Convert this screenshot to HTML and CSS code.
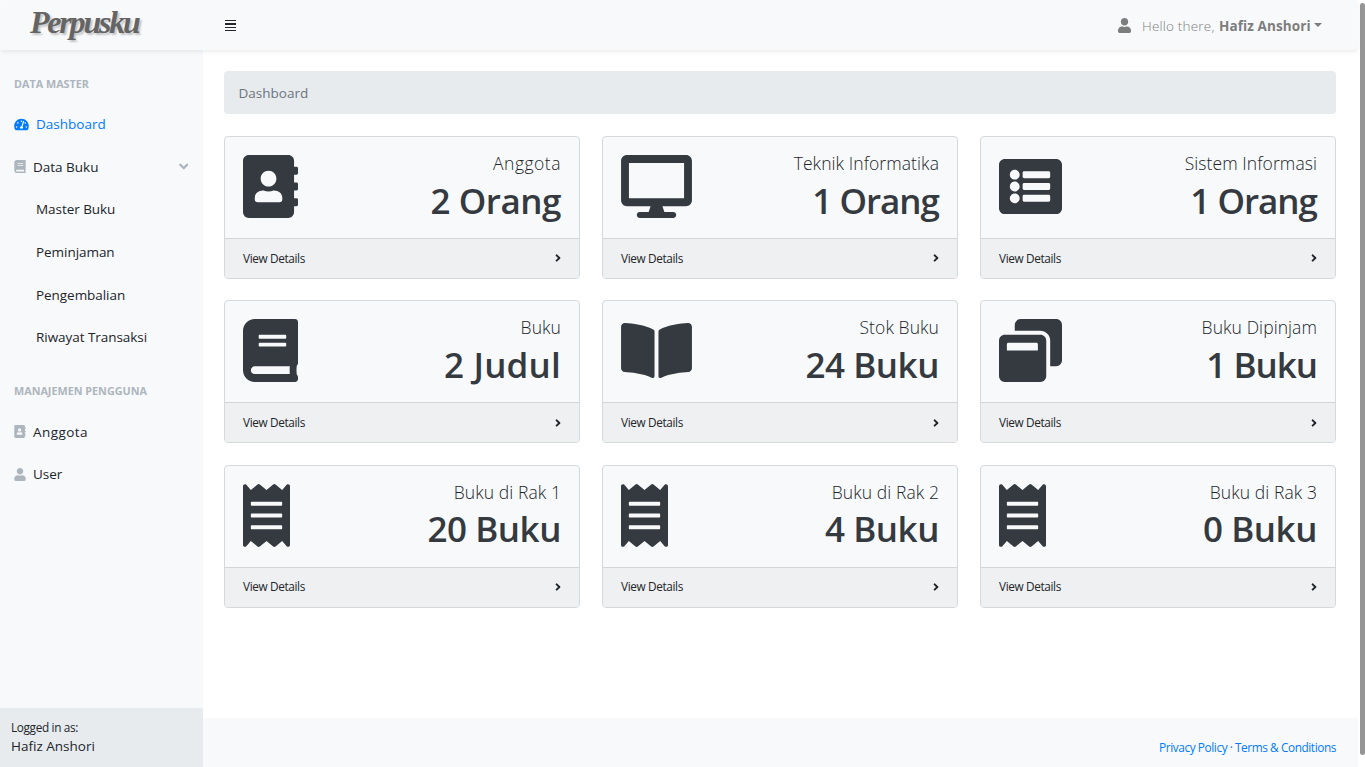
FILE: index.html
```html
<!DOCTYPE html>
<html lang="id">
<head>
<meta charset="utf-8">
<title>Perpusku</title>
<link rel="stylesheet" href="styles.css">
</head>
<body>
<svg class="sprite" aria-hidden="true">
  <symbol id="address-book" viewBox="0 0 448 512"><path d="M436 160c6.600 0 12-5.400 12-12v-40c0-6.600-5.400-12-12-12h-20V48c0-26.500-21.500-48-48-48H48C21.500 0 0 21.500 0 48v416c0 26.500 21.500 48 48 48h320c26.500 0 48-21.500 48-48v-48h20c6.600 0 12-5.400 12-12v-40c0-6.600-5.400-12-12-12h-20v-64h20c6.600 0 12-5.400 12-12v-40c0-6.600-5.400-12-12-12h-20v-64h20zm-228-32c35.300 0 64 28.700 64 64s-28.700 64-64 64-64-28.700-64-64 28.700-64 64-64zm112 236.800c0 10.600-10 19.200-22.400 19.200H118.400C106 384 96 375.400 96 364.800v-19.200c0-31.800 30.100-57.600 67.200-57.600h5c12.300 5.100 25.700 8 39.800 8s27.600-2.900 39.800-8h5c37.100 0 67.200 25.800 67.200 57.600v19.200z"/></symbol>
  <symbol id="desktop" viewBox="0 0 576 512"><path d="M528 0H48C21.500 0 0 21.500 0 48v320c0 26.500 21.500 48 48 48h192l-16 48h-72c-13.300 0-24 10.700-24 24s10.700 24 24 24h272c13.300 0 24-10.700 24-24s-10.700-24-24-24h-72l-16-48h192c26.500 0 48-21.500 48-48V48c0-26.500-21.500-48-48-48zm-16 352H64V64h448v288z"/></symbol>
  <symbol id="list-alt" viewBox="0 0 512 512"><path d="M464 480H48c-26.500 0-48-21.500-48-48V80c0-26.500 21.500-48 48-48h416c26.500 0 48 21.500 48 48v352c0 26.500-21.500 48-48 48zM128 120c-22.100 0-40 17.900-40 40s17.900 40 40 40 40-17.900 40-40-17.900-40-40-40zm0 96c-22.100 0-40 17.900-40 40s17.900 40 40 40 40-17.900 40-40-17.900-40-40-40zm0 96c-22.100 0-40 17.900-40 40s17.900 40 40 40 40-17.900 40-40-17.900-40-40-40zm288-136v-32c0-6.600-5.400-12-12-12H204c-6.600 0-12 5.400-12 12v32c0 6.600 5.400 12 12 12h200c6.600 0 12-5.400 12-12zm0 96v-32c0-6.600-5.400-12-12-12H204c-6.600 0-12 5.400-12 12v32c0 6.600 5.400 12 12 12h200c6.600 0 12-5.400 12-12zm0 96v-32c0-6.600-5.400-12-12-12H204c-6.600 0-12 5.400-12 12v32c0 6.600 5.400 12 12 12h200c6.600 0 12-5.400 12-12z"/></symbol>
  <symbol id="book" viewBox="0 0 448 512"><path d="M448 360V24c0-13.300-10.700-24-24-24H96C43 0 0 43 0 96v320c0 53 43 96 96 96h328c13.300 0 24-10.700 24-24v-16c0-7.500-3.500-14.300-8.900-18.700-4.200-15.400-4.200-59.300 0-74.700 5.400-4.300 8.900-11.100 8.900-18.600zM128 134c0-3.300 2.700-6 6-6h212c3.300 0 6 2.700 6 6v20c0 3.300-2.700 6-6 6H134c-3.300 0-6-2.700-6-6v-20zm0 64c0-3.300 2.700-6 6-6h212c3.300 0 6 2.700 6 6v20c0 3.300-2.700 6-6 6H134c-3.300 0-6-2.700-6-6v-20zm253.400 250H96c-17.700 0-32-14.300-32-32 0-17.600 14.400-32 32-32h285.400c-1.900 17.100-1.900 46.900 0 64z"/></symbol>
  <symbol id="book-open" viewBox="0 0 576 512"><path d="M542.220 32.050c-54.800 3.110-163.720 14.430-230.960 55.590-4.640 2.840-7.270 7.890-7.270 13.170v363.870c0 11.550 12.630 18.850 23.280 13.490 69.180-34.820 169.230-44.320 218.700-46.920 16.890-.89 30.020-14.430 30.020-30.660V62.750c.01-17.710-15.350-31.740-33.770-30.700zM264.730 87.640C197.500 46.480 88.580 35.170 33.780 32.050 15.360 31.010 0 45.040 0 62.750V400.600c0 16.240 13.130 29.780 30.020 30.660 49.490 2.600 149.590 12.110 218.770 46.950 10.620 5.350 23.210-1.940 23.210-13.460V100.630c0-5.290-2.620-10.140-7.270-12.990z"/></symbol>
  <symbol id="window-restore" viewBox="0 0 512 512"><path d="M512 48v288c0 26.500-21.500 48-48 48h-48V176c0-44.100-35.900-80-80-80H128V48c0-26.500 21.500-48 48-48h288c26.500 0 48 21.500 48 48zM384 176v288c0 26.500-21.500 48-48 48H48c-26.500 0-48-21.500-48-48V176c0-26.500 21.500-48 48-48h288c26.500 0 48 21.500 48 48zm-68 28c0-6.600-5.400-12-12-12H76c-6.600 0-12 5.400-12 12v52h252v-52z"/></symbol>
  <symbol id="receipt" viewBox="0 0 384 512"><path d="M358.400 3.200L320 48 265.600 3.200a15.900 15.900 0 0 0-19.200 0L192 48 137.600 3.200a15.900 15.900 0 0 0-19.200 0L64 48 25.600 3.200C15-4.700 0 2.800 0 16v480c0 13.200 15 20.700 25.600 12.800L64 464l54.400 44.800a15.900 15.900 0 0 0 19.200 0L192 464l54.400 44.800a15.900 15.900 0 0 0 19.200 0L320 464l38.400 44.800c10.500 7.900 25.600.4 25.600-12.800V16c0-13.200-15-20.700-25.600-12.800zM320 360c0 4.400-3.600 8-8 8H72c-4.400 0-8-3.600-8-8v-16c0-4.400 3.600-8 8-8h240c4.400 0 8 3.600 8 8v16zm0-96c0 4.400-3.600 8-8 8H72c-4.400 0-8-3.600-8-8v-16c0-4.400 3.600-8 8-8h240c4.400 0 8 3.600 8 8v16zm0-96c0 4.400-3.600 8-8 8H72c-4.400 0-8-3.600-8-8v-16c0-4.400 3.600-8 8-8h240c4.400 0 8 3.600 8 8v16z"/></symbol>
  <symbol id="user" viewBox="0 0 448 512"><path d="M224 256c70.700 0 128-57.300 128-128S294.700 0 224 0 96 57.300 96 128s57.300 128 128 128zm89.600 32h-16.700c-22.200 10.200-46.900 16-72.900 16s-50.600-5.800-72.900-16h-16.700C60.200 288 0 348.200 0 422.400V464c0 26.500 21.500 48 48 48h352c26.500 0 48-21.500 48-48v-41.600c0-74.200-60.200-134.400-134.400-134.400z"/></symbol>
  <symbol id="gauge" viewBox="0 0 576 512"><path d="M288 32C128.940 32 0 160.940 0 320c0 52.800 14.250 102.260 39.060 144.800 5.610 9.620 16.300 15.200 27.440 15.200h443c11.140 0 21.830-5.580 27.440-15.200C561.750 422.260 576 372.800 576 320c0-159.060-128.940-288-288-288zm0 64c14.710 0 26.580 10.130 30.320 23.650-1.110 2.260-2.640 4.230-3.450 6.670l-9.220 27.670c-5.130 3.490-10.970 6.010-17.640 6.010-17.670 0-32-14.330-32-32S270.330 96 288 96zM96 384c-17.670 0-32-14.330-32-32s14.330-32 32-32 32 14.330 32 32-14.330 32-32 32zm48-160c-17.670 0-32-14.330-32-32s14.330-32 32-32 32 14.330 32 32-14.330 32-32 32zm246.770-72.410l-61.330 184C343.130 347.330 352 364.540 352 384c0 11.720-3.380 22.550-8.880 32H232.880c-5.500-9.450-8.880-20.280-8.880-32 0-33.940 26.500-61.430 59.900-63.590l61.340-184.010c4.170-12.560 17.730-19.450 30.360-15.170 12.570 4.190 19.350 17.790 15.170 30.360zm14.660 57.200l15.520-46.550c3.470-1.290 7.130-2.230 11.050-2.230 17.670 0 32 14.330 32 32s-14.330 32-32 32c-11.380-.01-20.890-6.280-26.570-15.220zM480 384c-17.670 0-32-14.330-32-32s14.330-32 32-32 32 14.330 32 32-14.330 32-32 32z"/></symbol>
  <symbol id="angle-right" viewBox="0 0 256 512"><path d="M224.300 273l-136 136c-9.400 9.400-24.600 9.400-33.900 0l-22.600-22.600c-9.400-9.400-9.400-24.600 0-33.900l96.400-96.400-96.400-96.400c-9.400-9.400-9.400-24.600 0-33.900L54.300 103c9.400-9.400 24.600-9.400 33.900 0l136 136c9.500 9.400 9.500 24.600.1 34z"/></symbol>
  <symbol id="angle-down" viewBox="0 0 320 512"><path d="M143 352.300L7 216.300c-9.400-9.400-9.400-24.600 0-33.900l22.600-22.600c9.400-9.400 24.600-9.400 33.900 0l96.400 96.400 96.400-96.400c9.400-9.400 24.600-9.400 33.900 0l22.600 22.600c9.400 9.400 9.400 24.600 0 33.900l-136 136c-9.200 9.400-24.400 9.400-33.800 0z"/></symbol>
</svg>
<div class="app">
  <div class="page">
    <header class="topbar">
      <a class="brand">Perpusku</a>
      <div class="burger"><i></i><i></i><i></i><i></i></div>
      <div class="account">
        <svg class="account-icon"><use href="#user"/></svg>
        <span class="hello">Hello there,</span>
        <b class="account-name">Hafiz Anshori</b>
        <span class="caret"></span>
      </div>
    </header>
    <div class="body">
      <nav class="sidebar">
        <div class="menu">
          <div class="heading">DATA MASTER</div>
          <a class="link active"><svg class="icon wide"><use href="#gauge"/></svg><span>Dashboard</span></a>
          <a class="link"><svg class="icon"><use href="#book"/></svg><span>Data Buku</span><svg class="chevron"><use href="#angle-down"/></svg></a>
          <a class="link sub">Master Buku</a>
          <a class="link sub">Peminjaman</a>
          <a class="link sub">Pengembalian</a>
          <a class="link sub">Riwayat Transaksi</a>
          <div class="heading second">MANAJEMEN PENGGUNA</div>
          <a class="link"><svg class="icon"><use href="#address-book"/></svg><span class="loose">Anggota</span></a>
          <a class="link"><svg class="icon"><use href="#user"/></svg><span>User</span></a>
        </div>
        <div class="session">
          <div class="session-label">Logged in as:</div>
          <div class="session-name">Hafiz Anshori</div>
        </div>
      </nav>
      <div class="content">
        <main class="main">
          <div class="breadcrumb">Dashboard</div>
          <div class="cards">
            <section class="card"><div class="card-body"><svg class="card-icon"><use href="#address-book"/></svg><div class="stat"><div class="stat-name loose">Anggota</div><div class="stat-value">2 Orang</div></div></div><div class="card-foot"><span>View Details</span><svg class="go"><use href="#angle-right"/></svg></div></section>
            <section class="card"><div class="card-body"><svg class="card-icon w576"><use href="#desktop"/></svg><div class="stat"><div class="stat-name">Teknik Informatika</div><div class="stat-value tight">1 Orang</div></div></div><div class="card-foot"><span>View Details</span><svg class="go"><use href="#angle-right"/></svg></div></section>
            <section class="card"><div class="card-body"><svg class="card-icon w512"><use href="#list-alt"/></svg><div class="stat"><div class="stat-name">Sistem Informasi</div><div class="stat-value tight">1 Orang</div></div></div><div class="card-foot"><span>View Details</span><svg class="go"><use href="#angle-right"/></svg></div></section>
            <section class="card"><div class="card-body"><svg class="card-icon"><use href="#book"/></svg><div class="stat"><div class="stat-name">Buku</div><div class="stat-value wide-value">2 Judul</div></div></div><div class="card-foot"><span>View Details</span><svg class="go"><use href="#angle-right"/></svg></div></section>
            <section class="card"><div class="card-body"><svg class="card-icon w576"><use href="#book-open"/></svg><div class="stat"><div class="stat-name">Stok Buku</div><div class="stat-value">24 Buku</div></div></div><div class="card-foot"><span>View Details</span><svg class="go"><use href="#angle-right"/></svg></div></section>
            <section class="card"><div class="card-body"><svg class="card-icon w512"><use href="#window-restore"/></svg><div class="stat"><div class="stat-name">Buku Dipinjam</div><div class="stat-value tight">1 Buku</div></div></div><div class="card-foot"><span>View Details</span><svg class="go"><use href="#angle-right"/></svg></div></section>
            <section class="card"><div class="card-body"><svg class="card-icon w384"><use href="#receipt"/></svg><div class="stat"><div class="stat-name">Buku di Rak 1</div><div class="stat-value">20 Buku</div></div></div><div class="card-foot"><span>View Details</span><svg class="go"><use href="#angle-right"/></svg></div></section>
            <section class="card"><div class="card-body"><svg class="card-icon w384"><use href="#receipt"/></svg><div class="stat"><div class="stat-name">Buku di Rak 2</div><div class="stat-value">4 Buku</div></div></div><div class="card-foot"><span>View Details</span><svg class="go"><use href="#angle-right"/></svg></div></section>
            <section class="card"><div class="card-body"><svg class="card-icon w384"><use href="#receipt"/></svg><div class="stat"><div class="stat-name">Buku di Rak 3</div><div class="stat-value">0 Buku</div></div></div><div class="card-foot"><span>View Details</span><svg class="go"><use href="#angle-right"/></svg></div></section>
          </div>
        </main>
        <footer class="footer"><a>Privacy Policy</a><span class="dot">·</span><a>Terms &amp; Conditions</a></footer>
      </div>
    </div>
  </div>
  <div class="scroll"><div class="thumb"></div></div>
</div>
</body>
</html>
```
FILE: styles.css
```css
* { box-sizing: border-box; }
body { margin: 0; height: 767px; overflow: hidden; background: #fff; color: #212529; font-family: "Open Sans", "Noto Sans", sans-serif; font-size: 13.5px; line-height: 1.5; }
svg { fill: currentColor; flex: none; display: block; }
.sprite { display: none; }
.app { display: flex; height: 767px; }
.page { width: 1358px; display: flex; flex-direction: column; }

.topbar { height: 50px; flex: none; display: flex; align-items: center; background: #f8f9fb; border-radius: 4px; box-shadow: 0 2px 4px rgba(0,0,0,.075); position: relative; z-index: 1; }
.brand { width: 203px; padding-left: 30px; margin-right: 22px; height: 50px; line-height: 45px; font-family: "Liberation Serif", serif; font-style: italic; font-weight: 700; font-size: 32px; letter-spacing: -2.2px; color: #646464; text-shadow: 2px 2px 2px rgba(0,0,0,.22); }
.burger { width: 11px; display: flex; flex-direction: column; gap: 2px; margin-top: 1px; }
.burger i { height: 1.300px; background: #23272b; }
.account { margin-left: auto; margin-right: 36px; display: flex; align-items: center; color: #7c7d7d; padding-top: 2px; white-space: nowrap; }
.account-icon { width: 13px; height: 15px; margin-right: 11px; margin-top: -2px; }
.hello { width: 77px; letter-spacing: .2px; font-weight: 300; }
.account-name { width: 94px; font-weight: 700; letter-spacing: .1px; }
.caret { border: 4.300px solid transparent; border-top-color: currentColor; border-bottom: 0; margin-left: 1px; margin-top: -3px; }

.body { flex: 1; display: flex; min-height: 0; }
.sidebar { width: 203px; flex: none; background: #f8f9fb; display: flex; flex-direction: column; }
.menu { flex: 1; }
.heading { height: 52.800px; padding: 25px 14px 0; color: #adb5bd; font-weight: 700; font-size: 10.800px; line-height: 18px; letter-spacing: 0; }
.second { height: 51.600px; padding-top: 23px; }
.link { height: 42.700px; padding: 0 14px; display: flex; align-items: center; }
.loose { letter-spacing: .45px; }
.active { color: #007bff; }
.icon { width: 12px; height: 13px; margin-right: 7px; color: #adb5bd; }
.wide { width: 15px; margin-right: 7px; color: inherit; }
.sub { padding-left: 36px; letter-spacing: -.05px; }
.chevron { width: 9.500px; height: 15px; margin-left: auto; margin-right: 1px; color: #adb5bd; }
.session { height: 59px; padding: 9.500px 11px; background: #e8ebee; line-height: 19.500px; }
.session-label { font-size: 11.800px; letter-spacing: -.35px; }

.content { flex: 1; display: flex; flex-direction: column; }
.main { flex: 1; padding: 21px 22px 0 21px; }
.breadcrumb { height: 43px; line-height: 44px; margin-bottom: 22px; padding-left: 14.500px; border-radius: 4px; background: #e8ebee; color: #6c757d; }
.cards { display: grid; grid-template-columns: repeat(3, 356px); gap: 21.600px 22px; }
.card { height: 142.800px; display: flex; flex-direction: column; border: 1px solid #d6d8db; border-radius: 4px; background: #f8f9fb; overflow: hidden; color: #343a40; }
.card-body { flex: 1; padding: 18px 18px 0; display: flex; justify-content: space-between; }
.card-icon { width: 55px; height: 63px; }
.w576 { width: 71px; }
.w512 { width: 63px; }
.w384 { width: 47px; }
.stat { text-align: right; margin-top: -5px; white-space: nowrap; }
.stat-name { font-size: 17.500px; line-height: 27.500px; font-weight: 300; letter-spacing: .08px; color: #212529; }
.stat-name.loose { letter-spacing: .5px; }
.stat-value { font-size: 35px; line-height: 46px; font-weight: 600; letter-spacing: -.45px; }
.stat-value.tight { letter-spacing: -1px; }
.stat-value.wide-value { letter-spacing: .2px; }
.card-foot { height: 39.800px; padding: 0 18px; border-top: 1px solid #d3d5d8; background: #eff0f2; display: flex; align-items: center; justify-content: space-between; font-size: 11.800px; letter-spacing: -.37px; color: #212529; }
.go { width: 6px; height: 12px; }
.footer { height: 49px; padding: 10px 22px 0 0; background: #f8f9fb; display: flex; align-items: center; justify-content: flex-end; gap: 2.500px; font-size: 11.800px; letter-spacing: -.4px; color: #007bff; }
.scroll { width: 7px; padding: 3px 0 0 2px; background: #fff; }
.thumb { height: 752px; border-radius: 3px; background: #959595; }
```
